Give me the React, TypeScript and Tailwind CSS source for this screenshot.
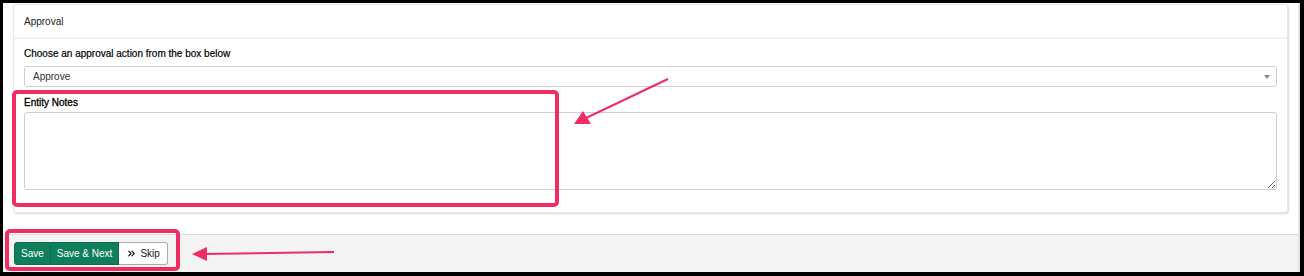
import { ChevronsRight } from 'lucide-react'

function Annotations() {
  return (
    <svg
      className="pointer-events-none absolute inset-0"
      width={1304}
      height={276}
      viewBox="0 0 1304 276"
    >
      {/* box round the notes field */}
      <rect x={14} y={92} width={543} height={113} rx={3} fill="none" stroke="#ef2c63" strokeWidth={4} />
      {/* box round the buttons */}
      <rect x={7} y={231} width={171} height={38} rx={3} fill="none" stroke="#ef2c63" strokeWidth={4} />
      {/* arrows */}
      <line x1={668} y1={79} x2={586} y2={118} stroke="#ef2c63" strokeWidth={2} />
      <polygon points="574,124 583,111 591,124" fill="#ef2c63" />
      <line x1={334} y1={252} x2={204} y2={254} stroke="#ef2c63" strokeWidth={2} />
      <polygon points="192,254 207,247 207,261" fill="#ef2c63" />
    </svg>
  )
}

export default function App() {
  return (
    <div className="relative w-[1304px] h-[276px] bg-black pt-[3px] pl-[3px] pr-[4px] pb-[4px] font-['Liberation_Sans',Arial,sans-serif]">
      <div className="flex h-full flex-col bg-white border-r-2 border-[#e3e3e3]">
        <div className="px-[10px] pt-[1px]">
          {/* Approval card */}
          <div className="rounded-[3px] border border-[#e6e6e6] bg-white shadow-[1px_1px_2px_rgba(0,0,0,0.15)]">
            <div className="flex h-[34px] items-center border-b-2 border-[#e9f5f7] px-[10px] text-[10px] text-[#222]">
              Approval
            </div>
            <div className="px-[10px] pt-[8px] pb-[22px]">
              <div className="text-[10px] leading-[14px] text-black [-webkit-text-stroke:0.2px_#000]">
                Choose an approval action from the box below
              </div>
              <div className="mt-[5px] flex h-[21px] items-center justify-between rounded-[3px] border border-[#cfcfcf] pl-[8px] pr-[6px] text-[10px] text-[#333]">
                <span>Approve</span>
                <svg width={6} height={4} viewBox="0 0 6 4">
                  <polygon points="0,0 6,0 3,4" fill="#888" />
                </svg>
              </div>
              <div className="mt-[9px] text-[10px] leading-[14px] text-black [-webkit-text-stroke:0.3px_#000]">Entity Notes</div>
              <textarea className="mt-[2px] block h-[78px] w-full rounded-[3px] border border-[#cfcfcf] text-[10px] outline-none" />
            </div>
          </div>
        </div>

        {/* footer with actions */}
        <div className="mt-auto flex h-[38px] items-start border-t border-[#dcdcdc] bg-[#f3f3f3] pl-[11px] pt-[7px]">
          <div className="flex h-[23px] text-[10px]">
            <button className="rounded-l-[3px] border border-[#0b6b4c] bg-[#0f7e5b] px-[6px] text-white">Save</button>
            <button className="border border-l-0 border-[#0b6b4c] bg-[#0f7e5b] px-[6px] text-white">Save &amp; Next</button>
            <button className="flex items-center gap-[3px] rounded-r-[3px] border border-l-0 border-[#aaa] bg-white px-[7px] text-[#111]">
              <ChevronsRight size={11} strokeWidth={2.5} />
              Skip
            </button>
          </div>
        </div>
      </div>
      <Annotations />
    </div>
  )
}
